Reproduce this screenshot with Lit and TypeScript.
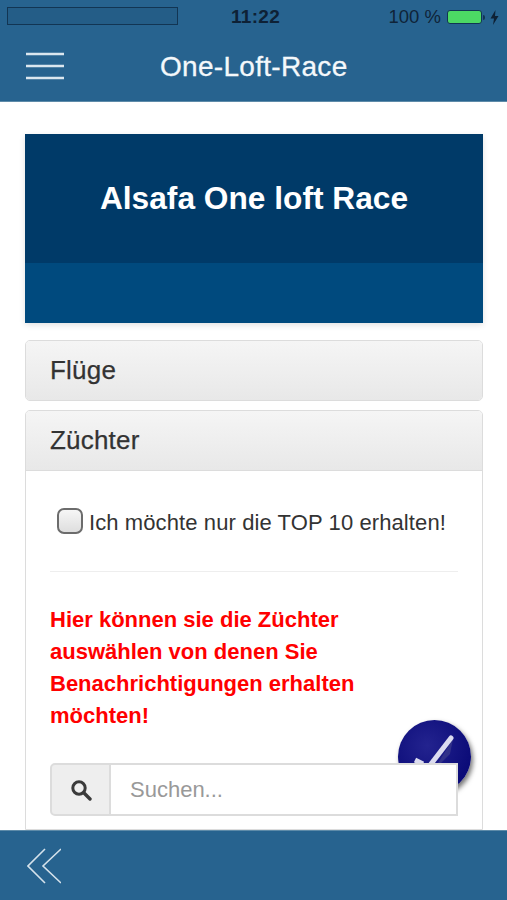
import { LitElement, html, css } from "lit";
import { customElement } from "lit/decorators.js";

@customElement("app-root")
export class AppRoot extends LitElement {
  static styles = css`
    :host { display: block; height: 900px; width: 507px; overflow: hidden; position: relative; background: #fff; font-family: "Liberation Sans", Arial, sans-serif; color: #333; }
    .page { display: flex; flex-direction: column; height: 900px; }
    header { background: #27638f; height: 102px; flex: none; border-bottom: 1px solid #5e8ba9; box-sizing: border-box; display: flex; flex-direction: column; }
    .status { height: 34px; display: grid; grid-template-columns: 1fr auto 1fr; align-items: center; padding: 0 8px 0 7px; color: #0d2438; }
    .signal { width: 169px; height: 16px; margin-top: -2px; border: 1px solid #123553; background: #245d87; }
    .time { font-size: 19px; font-weight: 700; letter-spacing: .3px; color: #0e2135; margin-left: 5px; }
    .right { display: flex; justify-content: flex-end; align-items: center; font-size: 18.5px; gap: 6px; color: #0f2438; }
    .battery { display: flex; align-items: center; gap: 1px; }
    .cell { width: 33px; height: 12px; border: 1px solid #123553; border-radius: 3px; background: #4cd964; }
    .nub { width: 2px; height: 5px; background: #123553; border-radius: 0 2px 2px 0; }
    .bolt { display: block; margin-left: -1px; }
    .bar { display: flex; align-items: center; height: 67px; position: relative; padding: 0 0 0 26px; }
    .burger { display: block; margin-top: -4px; }
    .title { position: absolute; left: 160px; top: 16px; font-size: 28px; line-height: 34px; color: #f4f8fb; letter-spacing: .3px; -webkit-text-stroke: .3px #f4f8fb; }
    main { flex: 1; min-height: 0; overflow: hidden; padding: 32px 24px 0 25px; display: flex; flex-direction: column; position: relative; }
    .hero { flex: none; height: 189px; background: #004a7e; box-shadow: 0 2px 6px rgba(0,0,0,.12); display: flex; flex-direction: column; }
    .hero-top { height: 129px; background: #003a68; display: flex; align-items: center; justify-content: center; color: #fff; font-size: 31.7px; font-weight: 700; }
    .panel { flex: none; border: 1px solid #dcdcdc; border-radius: 5px; margin-top: 9px; overflow: hidden; box-sizing: border-box; }
    .panel.first { margin-top: 17px; }
    .ph { height: 59px; box-sizing: border-box; padding: 0 24px; display: flex; align-items: center; font-size: 26px; letter-spacing: .2px; -webkit-text-stroke: .25px #333; color: #333; background: linear-gradient(#f5f5f5, #e8e8e8); }
    .panel.open { border-radius: 5px 5px 0 0; flex: 1; min-height: 0; }
    .panel.open .ph { border-bottom: 1px solid #dcdcdc; height: 60px; }
    .pb { padding: 0 24px; }
    .check { height: 101px; box-sizing: border-box; border-bottom: 1px solid #eee; display: flex; align-items: center; padding: 0 0 0 7px; font-size: 22px; letter-spacing: .1px; gap: 6px; color: #333; }
    .label { margin-top: 4px; }
    .box { width: 26px; height: 26px; border: 2px solid #6c6c6c; border-radius: 7px; background: linear-gradient(#f6f6f6, #dedede); box-sizing: border-box; flex: none; }
    .warn { color: #f00; font-weight: 700; font-size: 22px; line-height: 32px; margin: 32px 0 0; }
    .search { position: relative; z-index: 2; display: flex; height: 53px; margin-top: 31px; }
    .addon { width: 61px; flex: none; box-sizing: border-box; background: #eee; border: 2px solid #dcdcdc; border-radius: 5px 0 0 5px; display: flex; align-items: center; justify-content: center; }
    .input { flex: 1; box-sizing: border-box; background: #fff; border: 2px solid #dcdcdc; border-left: 0; display: flex; align-items: center; padding-left: 19px; font-size: 22px; color: #999; }
    .fab { position: absolute; left: 398px; top: 720px; width: 73px; height: 73px; border-radius: 50%; background: radial-gradient(circle at 40% 35%, #23238f, #0b0b78 70%); box-shadow: 2px 3px 5px rgba(0,0,0,.55); z-index: 1; overflow: hidden; }
    .fab svg { display: block; }
    footer { position: relative; z-index: 3; height: 70px; flex: none; background: #27638f; border-top: 1px solid #5e8ba9; box-sizing: border-box; display: flex; align-items: center; padding: 0 0 0 27px; }
  `;

  render() {
    return html`
      <div class="page">
        <header>
          <div class="status">
            <div class="signal"></div>
            <div class="time">11:22</div>
            <div class="right">
              <span>100 %</span>
              <span class="battery"><span class="cell"></span><span class="nub"></span></span>
              <svg class="bolt" width="9" height="15" viewBox="0 0 9 15"><path d="M5.5 0 L0.5 8.5 H4 L3 15 L8.5 6 H5 Z" fill="#0e2135"/></svg>
            </div>
          </div>
          <div class="bar">
            <svg class="burger" width="38" height="28" viewBox="0 0 38 28" fill="none" stroke="#dbe7ef" stroke-width="2.5">
              <path d="M0 2H38M0 14H38M0 26H38"/>
            </svg>
            <div class="title">One-Loft-Race</div>
          </div>
        </header>
        <main>
          <div class="hero"><div class="hero-top">Alsafa One loft Race</div></div>
          <div class="panel first"><div class="ph">Flüge</div></div>
          <div class="panel open">
            <div class="ph">Züchter</div>
            <div class="pb">
              <div class="check"><span class="box"></span><span class="label">Ich möchte nur die TOP 10 erhalten!</span></div>
              <p class="warn">Hier können sie die Züchter<br>auswählen von denen Sie<br>Benachrichtigungen erhalten<br>möchten!</p>
              <div class="search">
                <div class="addon">
                  <svg width="22" height="22" viewBox="0 0 22 22" fill="none" stroke="#3a3a3a">
                    <circle cx="9" cy="9" r="6.2" stroke-width="3"/>
                    <path d="M13.8 13.8 L20 20" stroke-width="3.4" stroke-linecap="round"/>
                  </svg>
                </div>
                <div class="input">Suchen...</div>
              </div>
            </div>
          </div>
        </main>
        <footer>
          <svg width="34" height="36" viewBox="0 0 34 36" fill="none" stroke="#d5e2eb" stroke-width="1.6">
            <path d="M18 1 L1 18 L18 35M34 1 L16 18 L34 35"/>
          </svg>
        </footer>
      </div>
      <div class="fab">
        <svg width="73" height="73" viewBox="0 0 73 73" fill="none">
          <path d="M55 19 L40 43 L36 50 L52 34 Z" fill="#3c3c8c" opacity=".7"/>
          <path d="M53 18 L33 44" stroke="#dcdcf0" stroke-width="5" stroke-linecap="round"/>
          <path d="M17 40 L25 44" stroke="#dcdcf0" stroke-width="5"/>
        </svg>
      </div>
    `;
  }
}
